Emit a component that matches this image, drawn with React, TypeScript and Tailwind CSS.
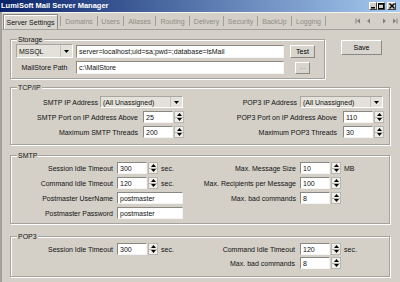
import React from "react";

function Up() {
  return (
    <svg width="5" height="3" viewBox="0 0 5 3">
      <path d="M2.5 0L5 3H0Z" fill="#000" />
    </svg>
  );
}
function Down() {
  return (
    <svg width="5" height="3" viewBox="0 0 5 3">
      <path d="M0 0H5L2.5 3Z" fill="#000" />
    </svg>
  );
}

function TextBox({ value, className }: { value: string; className: string }) {
  return (
    <div
      className={`h-full bg-white border border-t-[#8a8882] border-l-[#8a8882] border-b-[#f4f4f4] border-r-[#f4f4f4] flex items-center pl-[2px] text-[7px] leading-none whitespace-nowrap overflow-hidden ${className}`}
    >
      {value}
    </div>
  );
}

function Spinner() {
  return (
    <div className="w-[10px] h-full flex flex-col ml-px border border-[#b8b6b0] bg-[#efeee9]">
      <div className="flex-1 flex items-center justify-center border-b border-[#b8b6b0]">
        <Up />
      </div>
      <div className="flex-1 flex items-center justify-center">
        <Down />
      </div>
    </div>
  );
}

function Num({ value, unit }: { value: string; unit?: string }) {
  return (
    <div className="flex h-full items-center">
      <TextBox value={value} className="w-[30px]" />
      <Spinner />
      {unit ? <span className="ml-[3px] text-[7px] leading-none">{unit}</span> : null}
    </div>
  );
}

function Combo({ value, className }: { value: string; className: string }) {
  return (
    <div
      className={`h-full flex border border-t-[#a8a6a0] border-l-[#a8a6a0] border-b-white border-r-white bg-[#e4e1da] ${className}`}
    >
      <div className="flex-1 flex items-center pl-[2px] text-[7px] leading-none whitespace-nowrap overflow-hidden">
        {value}
      </div>
      <div className="w-[12px] flex items-center justify-center border-l border-[#c4c1ba]">
        <Down />
      </div>
    </div>
  );
}

function Btn({
  children,
  className,
  disabled,
}: {
  children: React.ReactNode;
  className: string;
  disabled?: boolean;
}) {
  return (
    <div
      className={`flex items-center justify-center border border-t-white border-l-white border-b-[#8a8882] border-r-[#8a8882] bg-[#d8d5ce] text-[7px] leading-none ${
        disabled ? "text-[#8e8c86]" : "text-black"
      } ${className}`}
    >
      {children}
    </div>
  );
}

function Group({
  title,
  className,
  children,
}: {
  title: string;
  className: string;
  children: React.ReactNode;
}) {
  return (
    <div
      className={`relative border border-[#a4a29c] shadow-[inset_1px_1px_0_#fff,1px_1px_0_#fff] ${className}`}
    >
      <span className="absolute left-[6px] top-[-5px] bg-[#d4d0c8] px-[1px] text-[7px] leading-[9px]">
        {title}
      </span>
      {children}
    </div>
  );
}

function Label({ children, className }: { children: React.ReactNode; className: string }) {
  return (
    <div className={`text-right text-[7px] leading-none whitespace-nowrap shrink-0 ${className}`}>
      {children}
    </div>
  );
}

function WinBtn({ kind }: { kind: "min" | "max" | "close" }) {
  return (
    <div
      className={`h-[8px] ${
        kind === "close" ? "w-[9px]" : "w-[8px]"
      } bg-[#d4d0c8] border-t border-l border-white border-b border-r border-b-[#404040] border-r-[#404040] flex items-center justify-center`}
    >
      {kind === "min" && (
        <svg width="6" height="6" viewBox="0 0 6 6">
          <rect x="1" y="4" width="4" height="1.5" fill="#000" />
        </svg>
      )}
      {kind === "max" && (
        <svg width="6" height="6" viewBox="0 0 6 6">
          <rect x="0.5" y="0.5" width="5" height="5" fill="none" stroke="#000" strokeWidth="1" />
          <rect x="0.5" y="0.5" width="5" height="1.2" fill="#000" />
        </svg>
      )}
      {kind === "close" && (
        <svg width="6" height="6" viewBox="0 0 6 6">
          <path d="M0.5 0.5L5.5 5.5M5.5 0.5L0.5 5.5" stroke="#000" strokeWidth="1.4" />
        </svg>
      )}
    </div>
  );
}

function Nav({ dir, bar }: { dir: "l" | "r"; bar?: boolean }) {
  return (
    <svg width="6" height="6" viewBox="0 0 6 6">
      {dir === "l" ? (
        <>
          <path d="M5 0.5V5.5L2 3Z" fill="#808080" />
          {bar && <rect x="0.5" y="0.5" width="1" height="5" fill="#808080" />}
        </>
      ) : (
        <>
          <path d="M1 0.5V5.5L4 3Z" fill="#808080" />
          {bar && <rect x="4.5" y="0.5" width="1" height="5" fill="#808080" />}
        </>
      )}
    </svg>
  );
}

const tabs: [string, string][] = [
  ["Domains", "w-[37px]"],
  ["Users", "w-[26px]"],
  ["Aliases", "w-[32px]"],
  ["Routing", "w-[34px]"],
  ["Delivery", "w-[34px]"],
  ["Security", "w-[34px]"],
  ["BackUp", "w-[34px]"],
  ["Logging", "w-[34px]"],
];

export default function App() {
  return (
    <div className="w-[400px] h-[282px] overflow-hidden bg-[#d4d0c8] font-['Liberation_Sans',Arial,sans-serif] text-[#111]">
      {/* Title bar */}
      <div className="h-[12px] flex items-center bg-[linear-gradient(to_right,#0a246a,#a6caf0)]">
        <span className="pl-[1px] text-white font-bold text-[7.5px] leading-none whitespace-nowrap">
          LumiSoft Mail Server Manager
        </span>
        <div className="ml-auto flex items-center pr-[4px]">
          <WinBtn kind="min" />
          <WinBtn kind="max" />
          <div className="w-[2px]" />
          <WinBtn kind="close" />
        </div>
      </div>

      <div className="border-l-2 border-[#a3a19b] h-[270px]">
        {/* Tabs */}
        <div className="h-[17px] flex items-end border-t border-[#f4f3ef]">
          <div className="ml-[1px] w-[55px] h-[15px] flex items-center justify-center border border-[#8a8882] border-b-0 shadow-[inset_1px_1px_0_#fff] bg-[#d8d5ce] text-[7px] leading-none whitespace-nowrap">
            Server Settings
          </div>
          <div className="h-full flex items-center">
            <div className="w-[2px]" />
            <div className="w-px h-[10px] bg-[#a09e98]" />
            {tabs.map(([t, w]) => (
              <div key={t} className={`${w} h-full flex items-center`}>
                <div className="flex-1 text-center text-[7px] leading-none text-[#8e8c86] whitespace-nowrap">
                  {t}
                </div>
                <div className="w-px h-[10px] bg-[#a09e98]" />
              </div>
            ))}
          </div>
          <div className="ml-auto h-full flex items-center pr-[2px] gap-[4px]">
            <Nav dir="l" bar />
            <Nav dir="l" />
            <div className="w-[3px]" />
            <Nav dir="r" />
            <Nav dir="r" bar />
          </div>
        </div>

        {/* Content */}
        <div className="border-t border-[#a4a29c] pl-[8px]">
          {/* Storage + Save */}
          <div className="flex mt-[9px]">
            <Group title="Storage" className="w-[315px] h-[40px]">
              <div className="flex flex-col mt-[4px] ml-[5px] gap-[3px]">
                <div className="flex h-[14px] items-center">
                  <Combo value="MSSQL" className="w-[57px]" />
                  <div className="ml-[3px] h-[13px]">
                    <TextBox
                      value="server=localhost;uid=sa;pwd=;database=lsMail"
                      className="w-[208px]"
                    />
                  </div>
                  <Btn className="ml-[6px] w-[25px] h-[13px]">Test</Btn>
                </div>
                <div className="flex h-[13px] items-center">
                  <div className="w-[57px] text-center text-[7px] leading-none whitespace-nowrap">
                    MailStore Path
                  </div>
                  <div className="ml-[3px] h-[13px]">
                    <TextBox value="c:\MailStore" className="w-[208px]" />
                  </div>
                  <Btn disabled className="ml-[11px] w-[15px] h-[12px]">
                    <span className="leading-none -mt-[2px]">...</span>
                  </Btn>
                </div>
              </div>
            </Group>
            <Btn className="ml-[16px] mt-[1px] w-[41px] h-[15px]">Save</Btn>
          </div>

          {/* TCP/IP */}
          <Group title="TCP/IP" className="mt-[8px] w-[380px] h-[58px]">
            <div className="flex flex-col mt-[8px] gap-[3px]">
              <div className="flex h-[12px] items-center">
                <Label className="w-[87px]">SMTP IP Address</Label>
                <Combo value="(All Unassigned)" className="ml-[2px] w-[83px]" />
                <Label className="w-[114px]">POP3 IP Address</Label>
                <Combo value="(All Unassigned)" className="ml-[3px] w-[83px]" />
              </div>
              <div className="flex h-[12px] items-center">
                <Label className="w-[127px]">SMTP Port on IP Address Above</Label>
                <div className="ml-[5px] h-full">
                  <Num value="25" />
                </div>
                <Label className="w-[153px]">POP3 Port on IP Address Above</Label>
                <div className="ml-[6px] h-full">
                  <Num value="110" />
                </div>
              </div>
              <div className="flex h-[12px] items-center">
                <Label className="w-[127px]">Maximum SMTP Threads</Label>
                <div className="ml-[5px] h-full">
                  <Num value="200" />
                </div>
                <Label className="w-[153px]">Maximum POP3 Threads</Label>
                <div className="ml-[6px] h-full">
                  <Num value="30" />
                </div>
              </div>
            </div>
          </Group>

          {/* SMTP */}
          <Group title="SMTP" className="mt-[10px] w-[380px] h-[69px]">
            <div className="flex flex-col mt-[6px] gap-[3px]">
              <div className="flex h-[12px] items-center">
                <div className="w-[172px] h-full flex items-center">
                  <Label className="w-[102px]">Session Idle Timeout</Label>
                  <div className="ml-[4px] h-full">
                    <Num value="300" unit="sec." />
                  </div>
                </div>
                <Label className="w-[113px]">Max. Message Size</Label>
                <div className="ml-[4px] h-full">
                  <Num value="10" unit="MB" />
                </div>
              </div>
              <div className="flex h-[12px] items-center">
                <div className="w-[172px] h-full flex items-center">
                  <Label className="w-[102px]">Command Idle Timeout</Label>
                  <div className="ml-[4px] h-full">
                    <Num value="120" unit="sec." />
                  </div>
                </div>
                <Label className="w-[113px]">Max. Recipients per Message</Label>
                <div className="ml-[4px] h-full">
                  <Num value="100" />
                </div>
              </div>
              <div className="flex h-[12px] items-center">
                <div className="w-[172px] h-full flex items-center">
                  <Label className="w-[102px]">Postmaster UserName</Label>
                  <div className="ml-[4px] h-full">
                    <TextBox value="postmaster" className="w-[66px]" />
                  </div>
                </div>
                <Label className="w-[113px]">Max. bad commands</Label>
                <div className="ml-[4px] h-full">
                  <Num value="8" />
                </div>
              </div>
              <div className="flex h-[12px] items-center">
                <div className="w-[172px] h-full flex items-center">
                  <Label className="w-[102px]">Postmaster Password</Label>
                  <div className="ml-[4px] h-full">
                    <TextBox value="postmaster" className="w-[66px]" />
                  </div>
                </div>
              </div>
            </div>
          </Group>

          {/* POP3 */}
          <Group title="POP3" className="mt-[12px] w-[380px] h-[41px]">
            <div className="flex flex-col mt-[6px] gap-[2px]">
              <div className="flex h-[12px] items-center">
                <div className="w-[172px] h-full flex items-center">
                  <Label className="w-[102px]">Session Idle Timeout</Label>
                  <div className="ml-[4px] h-full">
                    <Num value="300" unit="sec." />
                  </div>
                </div>
                <Label className="w-[112px]">Command Idle Timeout</Label>
                <div className="ml-[5px] h-full">
                  <Num value="120" unit="sec." />
                </div>
              </div>
              <div className="flex h-[12px] items-center">
                <div className="w-[172px] h-full" />
                <Label className="w-[112px]">Max. bad commands</Label>
                <div className="ml-[5px] h-full">
                  <Num value="8" />
                </div>
              </div>
            </div>
          </Group>
        </div>
      </div>
    </div>
  );
}
